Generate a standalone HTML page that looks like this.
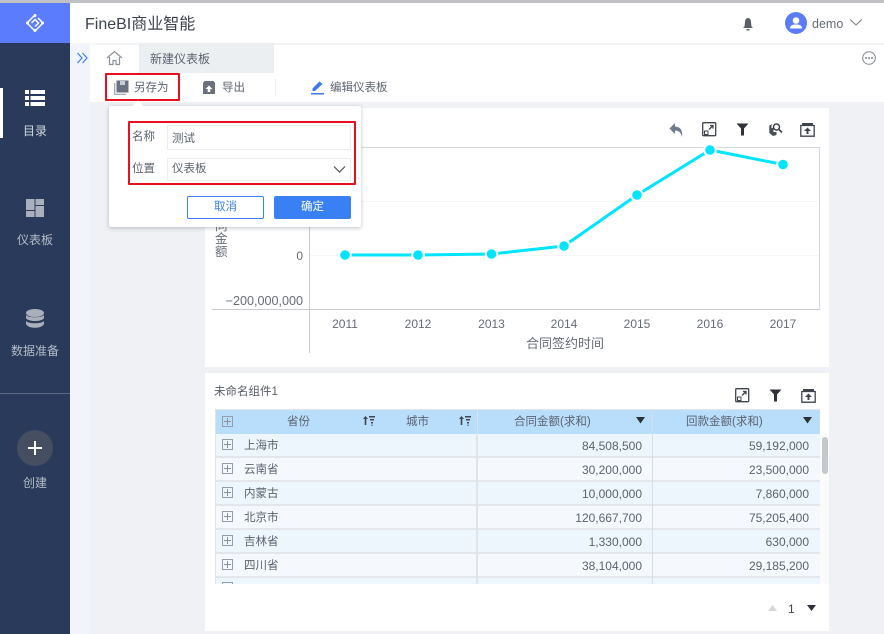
<!DOCTYPE html>
<html lang="zh"><head><meta charset="utf-8"><style>
*{box-sizing:border-box}
html{background:#eff1f5}
html,body{margin:0;padding:0}
body{width:884px;height:634px;overflow:hidden;position:relative;font-family:"Liberation Sans","Noto Sans CJK SC",sans-serif;font-size:12px;color:#555c6b}
#w{position:absolute;left:0;top:0;width:884px;height:634px;background:#eff1f5;overflow:hidden;filter:blur(.3px)}
.a{position:absolute}
.t{position:absolute;white-space:nowrap;line-height:16px}
.s{font-size:11.500px}
.side{color:#b5bcc9;font-size:12px;width:70px;text-align:center;left:0}
.row{position:absolute;left:215px;width:605px;height:24px;background:#eef6fd;border-bottom:2px solid #e3e7ec}
.row.o{background:#f5f9fe}
.row span{position:absolute;top:4px;line-height:16px;white-space:nowrap;color:#5b6270}
.row .n{left:29px;font-size:11.500px}
.row .c1{right:178px}
.row .c2{right:11px}
.pm{position:absolute;left:7px;top:5px;width:11px;height:11px;border:1px solid #969da8}
.pm:before{content:"";position:absolute;left:1px;right:1px;top:4px;height:1px;background:#8a919c}
.pm:after{content:"";position:absolute;top:1px;bottom:1px;left:4px;width:1px;background:#8a919c}
</style></head><body><div id="w">
<div class="a" style="left:0;top:0;width:884px;height:3px;background:#bfc1c5"></div>
<div class="a" style="left:70px;top:3px;width:814px;height:40px;background:#fff"></div>
<div class="t" style="left:85px;top:14px;font-size:16px;line-height:22px;color:#3d424c">FineBI商业智能</div>
<svg class="a" style="left:741px;top:17px" width="14" height="14" viewBox="0 0 14 14"><path d="M7 1C5 1 4 3 4 5L3.500 9.500 2 11H12L10.500 9.500 10 5C10 3 9 1 7 1Z" fill="#5b5f66"/><rect x="5.500" y="12" width="3" height="1.500" fill="#5b5f66"/></svg>
<svg class="a" style="left:785px;top:12px" width="22" height="22" viewBox="0 0 22 22"><circle cx="11" cy="11" r="11" fill="#5b7cf9"/><circle cx="11" cy="8.500" r="3.300" fill="#fff"/><path d="M5 16.500C5 13 8 12.500 11 12.500S17 13 17 16.500Z" fill="#fff"/></svg>
<div class="t" style="left:812px;top:16px;font-size:12.500px;color:#666b75">demo</div>
<svg class="a" style="left:849px;top:18px" width="14" height="9" viewBox="0 0 14 9"><path d="M1 1.500L7 7L13 1.500" fill="none" stroke="#777" stroke-width="1"/></svg>

<div class="a" style="left:0;top:3px;width:70px;height:40px;background:#5b7cfc"></div>
<svg class="a" style="left:25px;top:13px" width="20" height="20" viewBox="0 0 20 20"><g fill="none" stroke="#fff" stroke-width="1.500"><path d="M10 2L2 10L10 18L18 10L13 5"/><path d="M6.500 10L10 6.500L13.500 10L10 13.500"/></g><g fill="#fff"><circle cx="10" cy="2.500" r="1.500"/><circle cx="2.500" cy="10" r="1.500"/><circle cx="10" cy="17.500" r="1.500"/><circle cx="17.500" cy="10" r="1.500"/></g></svg>
<div class="a" style="left:0;top:43px;width:70px;height:591px;background:#2a3a5a"></div>
<div class="a" style="left:0;top:88px;width:3px;height:50px;background:#fff"></div>
<svg class="a" style="left:25px;top:90px" width="20" height="16" viewBox="0 0 20 16" fill="#fff"><rect width="4" height="4"/><rect x="5.500" width="14.500" height="4"/><rect y="6" width="4" height="4"/><rect x="5.500" y="6" width="14.500" height="4"/><rect y="12" width="4" height="4"/><rect x="5.500" y="12" width="14.500" height="4"/></svg>
<div class="t side" style="top:123px;color:#d5d9e0">目录</div>
<svg class="a" style="left:26px;top:199px" width="18" height="18" viewBox="0 0 18 18" fill="#a9b0bc"><rect width="8.500" height="11"/><rect x="9.500" width="8.500" height="6"/><rect y="12" width="8.500" height="6"/><rect x="9.500" y="7" width="8.500" height="11"/></svg>
<div class="t side" style="top:232px">仪表板</div>
<svg class="a" style="left:26px;top:309px" width="18" height="19" viewBox="0 0 18 19" fill="#a9b0bc"><ellipse cx="9" cy="4" rx="9" ry="4"/><path d="M0 6C2 9 16 9 18 6V9C16 13 2 13 0 9Z"/><path d="M0 12C2 15 16 15 18 12V15C16 20 2 20 0 15Z"/></svg>
<div class="t side" style="top:343px">数据准备</div>
<div class="a" style="left:0;top:393px;width:70px;height:1px;background:#5b6880"></div>
<div class="a" style="left:17px;top:430px;width:36px;height:36px;border-radius:50%;background:#464f62"></div>
<div class="a" style="left:28px;top:447px;width:14px;height:2px;background:#fff"></div>
<div class="a" style="left:34px;top:441px;width:2px;height:14px;background:#fff"></div>
<div class="t side" style="top:475px">创建</div>

<div class="a" style="left:70px;top:43px;width:20px;height:591px;background:#f1f5fb"></div>
<svg class="a" style="left:76px;top:52px" width="13" height="12" viewBox="0 0 13 12"><path d="M1.500 1L6 6L1.500 11M6.500 1L11 6L6.500 11" fill="none" stroke="#3f7cf0" stroke-width="1.200"/></svg>

<div class="a" style="left:90px;top:43px;width:794px;height:59px;background:#fff"></div>
<div class="a" style="left:70px;top:43px;width:814px;height:2px;background:#f3f4f6"></div>
<div class="a" style="left:139px;top:43px;width:135px;height:30px;background:#eceff2"></div>
<svg class="a" style="left:106px;top:50px" width="17" height="16" viewBox="0 0 17 16"><path d="M1 8L8.500 1.500L16 8M3.500 7V14.500H7V10.500H10V14.500H13.500V7" fill="none" stroke="#8b919b" stroke-width="1.200"/></svg>
<div class="t" style="left:150px;top:51px;color:#5b6270">新建仪表板</div>
<svg class="a" style="left:862px;top:51px" width="14" height="14" viewBox="0 0 14 14"><circle cx="7" cy="7" r="6.300" fill="none" stroke="#7f858f"/><circle cx="4" cy="7" r="1" fill="#7f858f"/><circle cx="7" cy="7" r="1" fill="#7f858f"/><circle cx="10" cy="7" r="1" fill="#7f858f"/></svg>

<div class="a" style="left:105px;top:73px;width:75px;height:28px;border:2px solid #e8101f;border-radius:1px"></div>
<svg class="a" style="left:114px;top:80px" width="15" height="15" viewBox="0 0 15 15"><path d="M2.500 .5H14.500V12.500H2.500Z" fill="#69717e"/><rect x="6" y="1" width="5" height="4" fill="#c9ccd1"/><path d="M.7 3V14.300H12" fill="none" stroke="#9aa1ab" stroke-width="1.200"/></svg>
<div class="t s" style="left:134px;top:80px;color:#5b6270">另存为</div>
<svg class="a" style="left:202px;top:80px" width="14" height="15" viewBox="0 0 14 15"><path d="M1 3L2.500 1H11.500L13 3V14H1Z" fill="#69717e"/><path d="M7 5.500L10.500 9H8.300V12H5.700V9H3.500Z" fill="#fff"/></svg>
<div class="t s" style="left:222px;top:80px;color:#5b6270">导出</div>
<div class="a" style="left:275px;top:79px;width:1px;height:17px;background:#eceef1"></div>
<svg class="a" style="left:311px;top:80px" width="14" height="15" viewBox="0 0 14 15"><path d="M8.500 1.500L11.500 4L4 11H1.500V8.500Z" fill="#3a78ee"/><rect x="0" y="13" width="13" height="1.500" fill="#3a78ee"/></svg>
<div class="t s" style="left:330px;top:80px;color:#5b6270">编辑仪表板</div>

<!-- chart widget -->
<div class="a" style="left:205px;top:108px;width:624px;height:259px;background:#fff"></div>
<svg class="a" style="left:205px;top:108px" width="624" height="259" viewBox="205 108 624 259">
<path d="M309.500 147.500H819.500V309" fill="none" stroke="#d5d7da"/>
<path d="M309.500 147V353M212 309.500H820" fill="none" stroke="#c8cacd"/>
<path d="M310 201.500H819M310 255.500H819" stroke="#f5f6f7"/>
<polyline points="345,255 418,255 491.500,254 564,246 637,195 710,150 783,164.500" fill="none" stroke="#00e5ff" stroke-width="3"/>
<g fill="#00e5ff" stroke="#fff" stroke-width="2"><circle cx="345" cy="255" r="5.800"/><circle cx="418" cy="255" r="5.800"/><circle cx="491.500" cy="254" r="5.800"/><circle cx="564" cy="246" r="5.800"/><circle cx="637" cy="195" r="5.800"/><circle cx="710" cy="150" r="5.800"/><circle cx="783" cy="164.500" r="5.800"/></g>
<g fill="#666b75" font-family="'Liberation Sans',sans-serif" font-size="12" text-anchor="middle"><text x="345" y="328">2011</text><text x="418" y="328">2012</text><text x="491.500" y="328">2013</text><text x="564" y="328">2014</text><text x="637" y="328">2015</text><text x="710" y="328">2016</text><text x="783" y="328">2017</text></g>
<g fill="#666b75" font-family="'Liberation Sans',sans-serif" text-anchor="end"><text x="303" y="260" font-size="12">0</text><text x="303" y="305" font-size="12.600">−200,000,000</text></g>
</svg>
<div class="t" style="left:526px;top:336px;font-size:13px;color:#666b75">合同签约时间</div>
<div class="t" style="left:215px;top:220px;width:13px;font-size:12.500px;line-height:13px;white-space:normal;color:#666b75">同<br>金<br>额</div>
<!-- chart tools -->
<svg class="a" style="left:669px;top:122px" width="15" height="16" viewBox="0 0 15 16"><path d="M6 1V4.500C10 4.500 14 7 13 15C12 10.500 10 8.500 6 8.500V12L.5 6.500Z" fill="#6c7a8c"/></svg>
<svg class="a" style="left:702px;top:122px" width="15" height="15" viewBox="0 0 15 15"><rect x=".7" y=".7" width="13" height="13" rx="1" fill="none" stroke="#3f444c" stroke-width="1.300"/><path d="M7 7.500L11 3.500M8 3.500H11V6.500" fill="none" stroke="#3f444c" stroke-width="1.300"/><rect x="2.500" y="9" width="3.500" height="3.500" fill="none" stroke="#3f444c"/></svg>
<svg class="a" style="left:736px;top:123px" width="13" height="13" viewBox="0 0 13 13"><path d="M.5 .5H12.500L8 5.500V12.500H5V5.500Z" fill="#2e3238"/></svg>
<svg class="a" style="left:768px;top:122px" width="15" height="15" viewBox="0 0 15 15"><path d="M4.500 2L1.300 3.500V11L5 14L8.500 13V10H5.500V6H3.500V3.500" fill="#4a4f58"/><circle cx="8.500" cy="5" r="3" fill="#fff" stroke="#3f444c" stroke-width="1.500"/><path d="M11 7.500L14 10.500" stroke="#3f444c" stroke-width="1.600"/></svg>
<svg class="a" style="left:800px;top:122px" width="15" height="15" viewBox="0 0 15 15"><path d="M.8 3.500H14.200V14.200H.8Z" fill="none" stroke="#3f444c" stroke-width="1.300"/><path d="M2 1H13V3.500H2Z" fill="#3f444c"/><path d="M7.500 5.500L11 9H8.500V12H6.500V9H4Z" fill="#3f444c"/></svg>

<!-- popup -->
<div class="a" style="left:109px;top:106px;width:252px;height:121px;background:#fff;border-radius:2px;box-shadow:0 1px 4px rgba(90,100,115,.4)"></div>
<div class="a" style="left:134px;top:102px;width:8px;height:8px;background:#fff;transform:rotate(45deg)"></div>
<div class="a" style="left:128px;top:121px;width:228px;height:64px;border:2px solid #e8101f;border-radius:1px"></div>
<div class="t s" style="left:132px;top:129px;color:#5b6270">名称</div>
<div class="t s" style="left:132px;top:161px;color:#5b6270">位置</div>
<div class="a" style="left:167px;top:125px;width:184px;height:25px;border:1px solid #eceef1"></div>
<div class="a" style="left:167px;top:158px;width:184px;height:23px;border:1px solid #eceef1"></div>
<div class="t s" style="left:172px;top:131px;color:#5b6270">测试</div>
<div class="t s" style="left:172px;top:161px;color:#5b6270">仪表板</div>
<svg class="a" style="left:333px;top:165px" width="13" height="9" viewBox="0 0 13 9"><path d="M1 1.500L6.500 7L12 1.500" fill="none" stroke="#4a4f58" stroke-width="1.200"/></svg>
<div class="a s" style="left:187px;top:196px;width:77px;height:23px;border:1px solid #3a80f5;border-radius:2px;color:#3a80f5;text-align:center;line-height:21px">取消</div>
<div class="a s" style="left:274px;top:196px;width:77px;height:23px;background:#3a80f5;border-radius:2px;color:#fff;text-align:center;line-height:23px">确定</div>

<!-- table widget -->
<div class="a" style="left:205px;top:373px;width:624px;height:258px;background:#fff"></div>
<div class="t" style="left:214px;top:384px;font-size:11.500px;color:#555a64">未命名组件1</div>
<svg class="a" style="left:735px;top:388px" width="15" height="15" viewBox="0 0 15 15"><rect x=".7" y=".7" width="13" height="13" rx="1" fill="none" stroke="#3f444c" stroke-width="1.300"/><path d="M7 7.500L11 3.500M8 3.500H11V6.500" fill="none" stroke="#3f444c" stroke-width="1.300"/><rect x="2.500" y="9" width="3.500" height="3.500" fill="none" stroke="#3f444c"/></svg>
<svg class="a" style="left:769px;top:389px" width="13" height="13" viewBox="0 0 13 13"><path d="M.5 .5H12.500L8 5.500V12.500H5V5.500Z" fill="#2e3238"/></svg>
<svg class="a" style="left:801px;top:388px" width="15" height="15" viewBox="0 0 15 15"><path d="M.8 3.500H14.200V14.200H.8Z" fill="none" stroke="#3f444c" stroke-width="1.300"/><path d="M2 1H13V3.500H2Z" fill="#3f444c"/><path d="M7.500 5.500L11 9H8.500V12H6.500V9H4Z" fill="#3f444c"/></svg>

<div class="a" style="left:215px;top:409px;width:605px;height:25px;background:#b8defc;border-top:1px solid #e1e5ea"></div>
<div class="pm" style="left:222px;top:416px"></div>
<div class="t s" style="left:287px;top:414px;color:#5b6270">省份</div>
<div class="t s" style="left:406px;top:414px;color:#5b6270">城市</div>
<div class="t s" style="left:514px;top:414px;color:#5b6270">合同金额(求和)</div>
<div class="t s" style="left:686px;top:414px;color:#5b6270">回款金额(求和)</div>
<svg class="a" style="left:363px;top:415px" width="12" height="12" viewBox="0 0 12 12" fill="#3f444c"><path d="M2.500 1L5 4H3.300V10H1.700V4H0Z"/><path d="M6 1H12V2.500H6ZM7 4H11V5.500H7ZM8 7H10V8.500H8ZM8.500 9.500H9.500V11H8.500Z"/></svg>
<svg class="a" style="left:459px;top:415px" width="12" height="12" viewBox="0 0 12 12" fill="#3f444c"><path d="M2.500 1L5 4H3.300V10H1.700V4H0Z"/><path d="M6 1H12V2.500H6ZM7 4H11V5.500H7ZM8 7H10V8.500H8ZM8.500 9.500H9.500V11H8.500Z"/></svg>
<svg class="a" style="left:636px;top:417px" width="9" height="7" viewBox="0 0 9 7"><path d="M0 0H9L4.500 6.500Z" fill="#2e3238"/></svg>
<svg class="a" style="left:803px;top:417px" width="9" height="7" viewBox="0 0 9 7"><path d="M0 0H9L4.500 6.500Z" fill="#2e3238"/></svg>

<div class="row" style="top:434px"><i class="pm"></i><span class="n">上海市</span><span class="c1">84,508,500</span><span class="c2">59,192,000</span></div>
<div class="row o" style="top:458px"><i class="pm"></i><span class="n">云南省</span><span class="c1">30,200,000</span><span class="c2">23,500,000</span></div>
<div class="row" style="top:482px"><i class="pm"></i><span class="n">内蒙古</span><span class="c1">10,000,000</span><span class="c2">7,860,000</span></div>
<div class="row o" style="top:506px"><i class="pm"></i><span class="n">北京市</span><span class="c1">120,667,700</span><span class="c2">75,205,400</span></div>
<div class="row" style="top:530px"><i class="pm"></i><span class="n">吉林省</span><span class="c1">1,330,000</span><span class="c2">630,000</span></div>
<div class="row o" style="top:554px"><i class="pm"></i><span class="n">四川省</span><span class="c1">38,104,000</span><span class="c2">29,185,200</span></div>
<div class="a" style="left:215px;top:578px;width:605px;height:6px;background:#eef6fd;overflow:hidden"><i class="pm" style="top:4px"></i></div>
<div class="a" style="left:477px;top:409px;width:1px;height:175px;background:#dfe3e8"></div>
<div class="a" style="left:476px;top:434px;width:2px;height:150px;background:#e0e3e8"></div>
<div class="a" style="left:652px;top:409px;width:1px;height:175px;background:#d8dde3"></div>
<div class="a" style="left:215px;top:409px;width:1px;height:175px;background:#e1e5ea"></div>
<div class="a" style="left:820px;top:434px;width:9px;height:150px;background:#fafbfb"></div>
<div class="a" style="left:822px;top:437px;width:6px;height:37px;border-radius:3px;background:#c4c7cb"></div>

<svg class="a" style="left:768px;top:605px" width="9" height="6" viewBox="0 0 9 6"><path d="M0 6H9L4.500 0Z" fill="#d5d7da"/></svg>
<div class="t" style="left:788px;top:601px;color:#3f444c">1</div>
<svg class="a" style="left:807px;top:605px" width="9" height="6" viewBox="0 0 9 6"><path d="M0 0H9L4.500 6Z" fill="#2e3238"/></svg>
</div></body></html>
